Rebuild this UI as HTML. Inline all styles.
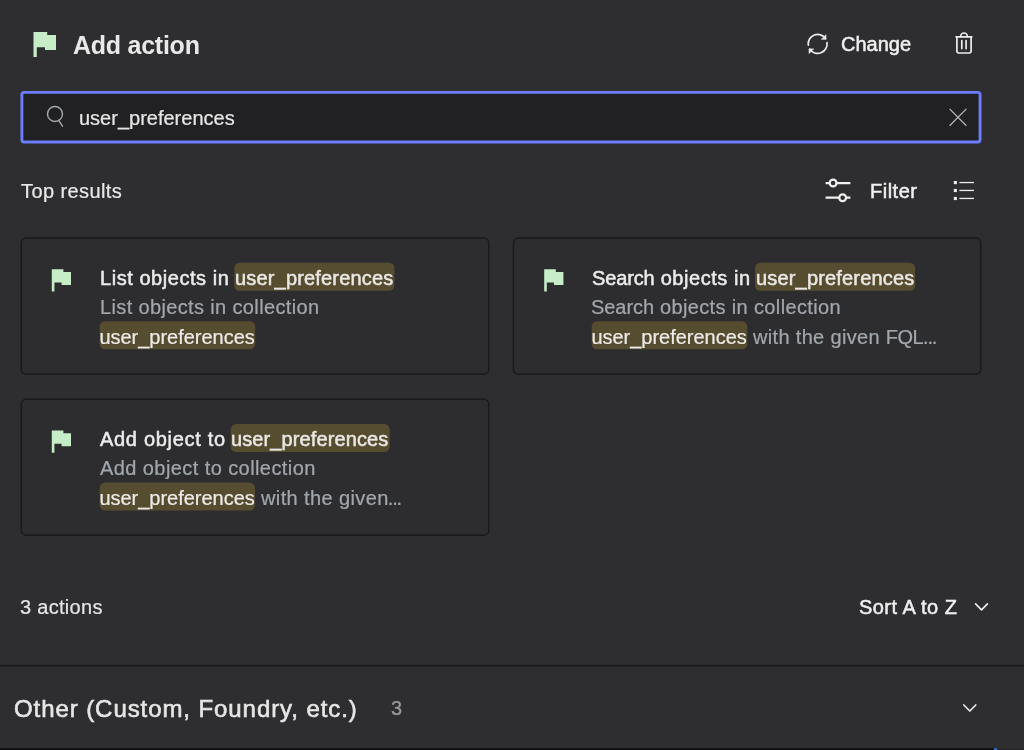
<!DOCTYPE html>
<html>
<head>
<meta charset="utf-8">
<title>Add action</title>
<style>
  html, body { margin: 0; padding: 0; }
  body {
    width: 1024px; height: 750px; overflow: hidden; position: relative;
    background: #2e2e30;
    font-family: "Liberation Sans", sans-serif;
    color: #ececec;
  }
  svg { position: absolute; overflow: visible; }
  .t { position: absolute; white-space: nowrap; line-height: 1; will-change: transform; -webkit-text-stroke: 0.22px currentColor; }
  .med { -webkit-text-stroke: 0.5px currentColor; }

  /* header */
  #title { left: 72.8px; top: 32.5px; font-size: 25px; font-weight: bold; letter-spacing: -0.25px; -webkit-text-stroke: 0; color: #e9e9e9; }
  #change { left: 841.0px; top: 34.4px; font-size: 20px; color: #f0f0f0; letter-spacing: 0px; }

  /* search */
  #q { left: 79.0px; top: 108.4px; font-size: 20px; color: #e6e6e6; }

  #top { left: 20.5px; top: 181px; font-size: 20px; color: #e8e8e8; letter-spacing: 0.4px; }
  #filter { left: 870px; top: 181px; font-size: 20px; color: #f0f0f0; letter-spacing: 0.5px; }

  .l1 { font-size: 20px; color: #ececec; }
  .l2 { font-size: 20px; color: #a2a7ad; }
  mark { background: transparent; color: #e9e8e4; margin: 0; padding: 0; }
  .l1 mark { letter-spacing: 0.17px; margin-left: 1.0px; }
  .l2 mark { letter-spacing: -0.02px; margin-left: -0.6px; color: #ecebe8; }

  #count { left: 19.6px; top: 597.3px; font-size: 20px; color: #e4e4e4; letter-spacing: 0.3px; }
  #sort { left: 858.5px; top: 597.3px; font-size: 20px; color: #f0f0f0; letter-spacing: 0.45px; }

  #other { left: 14.2px; top: 696.5px; font-size: 24px; color: #e6e6e6; letter-spacing: 0.92px; }
  #othercnt { left: 391.4px; top: 698.3px; font-size: 20px; color: #9b9ba3; }
</style>
</head>
<body>

<!-- big flag -->
<svg width="1024" height="750" viewBox="0 0 1024 750" style="left:0;top:0">
  <path d="M33.5 32 H47.2 V35 H56 V50 H45 V47.2 H36.8 V57 H33.5 Z" fill="#c6edc8"/>
</svg>
<div id="title" class="t">Add action</div>

<div id="change" class="t med">Change</div>

<svg width="1024" height="750" viewBox="0 0 1024 750" style="left:0;top:0"><rect x="21.9" y="92.4" width="958.15" height="49.65" rx="2.2" fill="#212123" stroke="#6b7cfd" stroke-width="2.9"/></svg>
<div id="q" class="t">user_preferences</div>

<div id="top" class="t">Top results</div>
<div id="filter" class="t med">Filter</div>

<svg width="1024" height="750" viewBox="0 0 1024 750" style="left:0;top:0">
  <g fill="#2d2d2f" stroke="#19191e" stroke-width="1.5">
    <rect x="21.25" y="238.0" width="467.5" height="136.2" rx="4.8"/>
    <rect x="513.45" y="238.0" width="467.3" height="136.2" rx="4.8"/>
    <rect x="21.25" y="399.25" width="467.5" height="136.0" rx="4.8"/>
  </g>
  <g fill="#564c30">
    <rect x="234.3" y="262.8" width="160.0" height="28.0" rx="5.3"/>
    <rect x="99.7" y="321.3" width="155.5" height="27.9" rx="5.3"/>
    <rect x="755.0" y="262.8" width="160.1" height="28.0" rx="5.3"/>
    <rect x="591.7" y="321.3" width="155.6" height="27.9" rx="5.3"/>
    <rect x="230.7" y="424.1" width="159.0" height="28.0" rx="5.3"/>
    <rect x="99.7" y="482.6" width="155.3" height="27.9" rx="5.3"/>
  </g>
  <rect x="0" y="664.9" width="1024" height="1.6" fill="#19191d"/>
  <rect x="0" y="748.4" width="993.7" height="1.6" fill="#0a0a0c"/>
  <rect x="994" y="748.2" width="3.1" height="1.8" fill="#2c6bc0"/>
  <rect x="997.3" y="748.7" width="26.7" height="1.3" fill="#252527"/>
</svg>

<!-- card 1 text -->
<div id="c1a" class="t l1 med" style="left:99.5px; top:267.5px; letter-spacing:0.55px">List objects in</div>
<div id="c1m" class="t l1 med" style="left:234.4px; top:267.5px"><mark>user_preferences</mark></div>
<div id="c1b" class="t l2" style="left:100px; top:297px; letter-spacing:0.36px">List objects in collection</div>
<div id="c1n" class="t l2" style="left:99.7px; top:326.9px"><mark>user_preferences</mark></div>

<!-- card 2 text -->
<div id="c2a" class="t l1 med" style="left:591.7px; top:267.5px; letter-spacing:0.55px"><span style="letter-spacing:-0.14px">Search</span> objects in</div>
<div id="c2m" class="t l1 med" style="left:755px; top:267.5px"><mark>user_preferences</mark></div>
<div id="c2b" class="t l2" style="left:591.1px; top:297px; letter-spacing:0.36px"><span style="letter-spacing:-0.05px">Search</span> objects in collection</div>
<div id="c2n" class="t l2" style="left:591.7px; top:326.9px"><mark>user_preferences</mark></div>
<div id="c2c" class="t l2" style="left:752.5px; top:326.9px; letter-spacing:0.33px">with the given <span style="letter-spacing:-0.6px">FQL</span><span style="letter-spacing:-1.1px">...</span></div>

<!-- card 3 text -->
<div id="c3a" class="t l1 med" style="left:100px; top:428.8px; letter-spacing:0.7px">Add object to</div>
<div id="c3m" class="t l1 med" style="left:230.4px; top:428.8px"><mark style="letter-spacing:0.11px">user_preferences</mark></div>
<div id="c3b" class="t l2" style="left:100px; top:458.3px; letter-spacing:0.42px">Add object to collection</div>
<div id="c3n" class="t l2" style="left:99.7px; top:488.2px"><mark>user_preferences</mark></div>
<div id="c3c" class="t l2" style="left:261px; top:488.2px; letter-spacing:0.39px">with the given<span style="letter-spacing:-1.1px; margin-left:-1.1px">...</span></div>

<div id="count" class="t">3 actions</div>
<div id="sort" class="t med">Sort A to Z</div>


<div id="other" class="t" style="-webkit-text-stroke:0.6px currentColor">Other (Custom, Foundry, etc.)</div>
<div id="othercnt" class="t">3</div>

<!-- icons -->
<svg width="1024" height="750" viewBox="0 0 1024 750" style="left:0;top:0" fill="none" stroke-linecap="round" stroke-linejoin="round">
  <!-- small flags -->
  <g fill="#c6edc8" stroke="none">
    <path id="sf" d="M51.8 269.3 H63.4 V271.9 H71 V284.9 H61.6 V282.5 H54.4 V291.5 H51.8 Z"/>
    <use href="#sf" x="492.4" y="0"/>
    <use href="#sf" x="0" y="161.3"/>
  </g>

  <!-- refresh icon -->
  <g stroke="#ececec" stroke-width="1.7">
    <path d="M808.3 45.2 A9.5 9.5 0 0 1 825.6 38.6"/>
    <path d="M827.0 42.6 A9.5 9.5 0 0 1 809.7 49.2"/>
  </g>
  <g fill="#ececec" stroke="#ececec" stroke-width="0.6" >
    <path d="M826.0 35.0 V39.3 H821.6 Z"/>
    <path d="M809.0 53.2 V48.9 H813.4 Z"/>
  </g>
  <!-- trash icon -->
  <g stroke="#ececec" stroke-width="1.7">
    <path d="M956.1 36.8 H971.8"/>
    <path d="M956.9 36.8 V51.2 A1.8 1.8 0 0 0 958.7 53 H969.3 A1.8 1.8 0 0 0 971.1 51.2 V36.8"/>
    <path d="M960.6 36.6 A3.4 3.6 0 0 1 967.4 36.6"/>
    <path d="M961.8 40.6 V48.6 M966.1 40.6 V48.6"/>
  </g>
  <!-- search icon -->
  <g stroke="#a3a8ae" stroke-width="1.4">
    <circle cx="55.0" cy="114.0" r="7.5"/>
    <path d="M58.9 120.6 L62.5 126.2"/>
  </g>
  <!-- clear X -->
  <g stroke="#b4b4ba" stroke-width="1.3" stroke-linecap="butt">
    <path d="M949.6 108.9 L966.4 125.7 M966.4 108.9 L949.6 125.7"/>
  </g>
  <!-- filter icon -->
  <g stroke="#f0f0f0" stroke-width="2.25" stroke-linecap="butt">
    <path d="M825.6 183.05 H829.8 M836.4 183.05 H850.4"/>
    <circle cx="833.1" cy="183.05" r="3.4"/>
    <path d="M825.6 197.7 H839.3 M846 197.7 H850.4"/>
    <circle cx="842.65" cy="197.7" r="3.4"/>
  </g>
  <!-- list icon -->
  <g fill="#ececec" stroke="none">
    <rect x="953.8" y="181" width="3.1" height="3.2"/>
    <rect x="953.8" y="188.9" width="3.1" height="3.2"/>
    <rect x="953.8" y="196.9" width="3.1" height="3.2"/>
    <rect x="959.4" y="181.9" width="14.6" height="1.3"/>
    <rect x="959.4" y="189.8" width="14.6" height="1.3"/>
    <rect x="959.4" y="197.8" width="14.6" height="1.3"/>
  </g>
  <!-- chevrons -->
  <g stroke="#ececec" stroke-width="1.7">
    <path d="M975.6 603.9 L981.5 609.9 L987.4 603.9"/>
    <path d="M963.8 705 L969.8 711 L975.8 705"/>
  </g>
</svg>

</body>
</html>
